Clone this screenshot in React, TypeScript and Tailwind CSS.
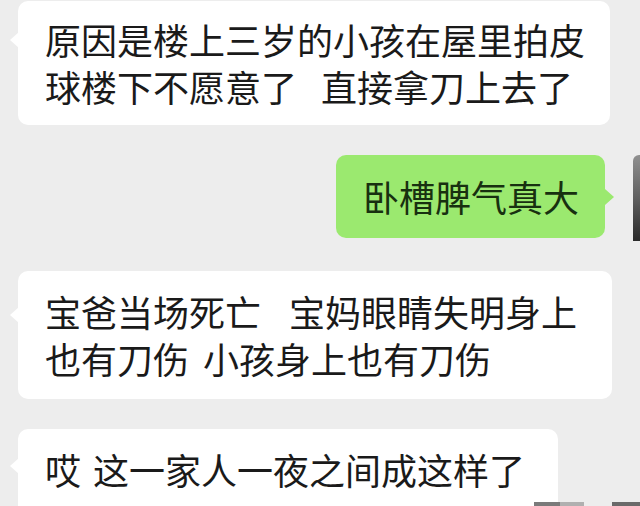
import React from "react";

const font = { fontFamily: '"Noto Sans CJK SC", "Noto Sans", sans-serif' };

function Sp({ w }: { w: string }) {
  return <span className={`inline-block ${w}`} />;
}

function LeftTail({ top }: { top: string }) {
  return (
    <span
      className={`absolute left-[-8px] ${top} w-0 h-0 border-y-[8px] border-y-transparent border-r-[9px] border-r-white`}
    />
  );
}

export default function App() {
  return (
    <div
      className="w-[640px] h-[506px] overflow-hidden bg-[#ededed] relative text-[36px] leading-[47px] text-[#1a1a1a]"
      style={font}
    >
      <div className="flex flex-col gap-[30px] pt-[1px]">
        {/* bubble 1 */}
        <div className="relative ml-[18px] w-[592px] bg-white rounded-[10px] pl-[27px] py-[15px] whitespace-nowrap">
          <LeftTail top="top-[31px]" />
          原因是楼上三岁的小孩在屋里拍皮
          <br />
          球楼下不愿意了<Sp w="w-[24px]" />直接拿刀上去了
        </div>

        {/* bubble 2 (green, right) */}
        <div className="flex justify-end items-start">
          <div className="relative w-[269px] bg-[#9be96f] rounded-[10px] pl-[27px] py-[18px] whitespace-nowrap text-[#183010]">
            卧槽脾气真大
            <span className="absolute right-[-9px] top-[34px] w-0 h-0 border-y-[8px] border-y-transparent border-l-[9px] border-l-[#9be96f]" />
          </div>
          <div className="ml-[28px] w-[7px] h-[86px] rounded-tl-[6px] bg-gradient-to-b from-[#909090] via-[#606060] to-[#2a2a2a]" />
        </div>

        {/* bubble 3 */}
        <div className="relative ml-[18px] w-[594px] bg-white rounded-[10px] pl-[27px] py-[17px] whitespace-nowrap">
          <LeftTail top="top-[36px]" />
          宝爸当场死亡<Sp w="w-[28px]" />宝妈眼睛失明身上
          <br />
          也有刀伤<Sp w="w-[14px]" />小孩身上也有刀伤
        </div>

        {/* bubble 4 */}
        <div className="relative ml-[18px] w-[540px] bg-white rounded-[10px] pl-[27px] pt-[17px] pb-[30px] whitespace-nowrap">
          <LeftTail top="top-[29px]" />
          哎<Sp w="w-[12px]" />这一家人一夜之间成这样了
        </div>
      </div>

      <div className="absolute left-[534px] top-[502px] flex h-[4px]">
        <div className="w-[26px] bg-[#7a7a7a]" />
        <div className="w-[24px] bg-[#b0b0b0]" />
        <div className="w-[28px]" />
        <div className="w-[28px] bg-[#6a6a6a]" />
      </div>
    </div>
  );
}
